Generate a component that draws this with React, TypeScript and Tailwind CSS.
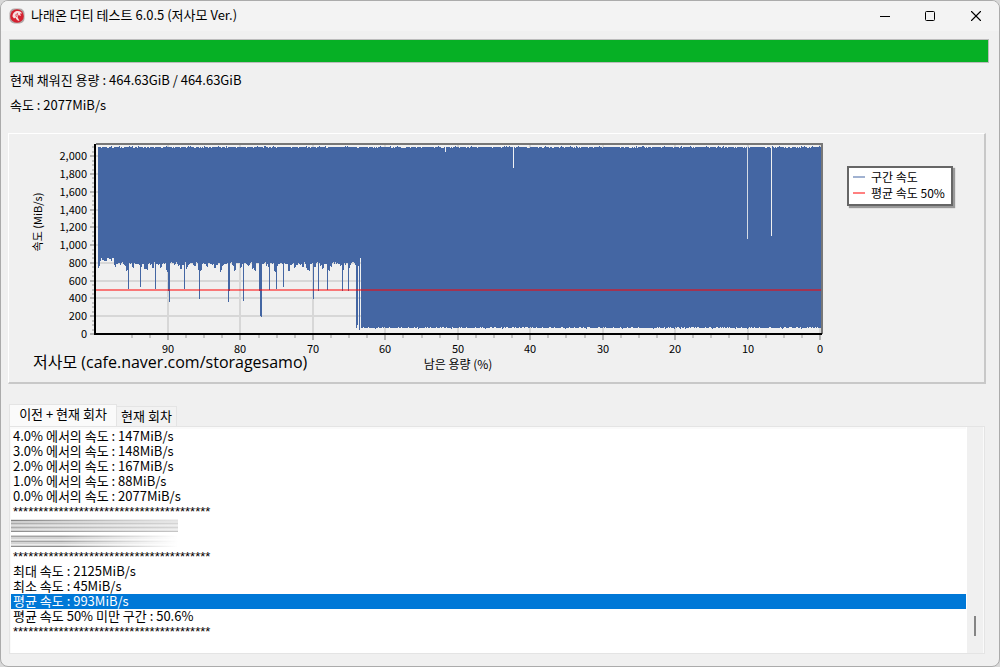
import React, { useState } from 'react';
import { X } from 'lucide-react';

const CHART_W = 820;
const CHART_H = 248;
const PLOT_LEFT = 86;
const PLOT_RIGHT = 811;
const PLOT_TOP = 11;
const BASE_Y = 200;

const yOf = (v: number) => Math.round(BASE_Y - v * 0.0889);
const xOf = (percent: number) => Math.round(PLOT_RIGHT - 1 - percent * 7.245);

const yTicks = [0, 200, 400, 600, 800, 1000, 1200, 1400, 1600, 1800, 2000];
const xTicks = [90, 80, 70, 60, 50, 40, 30, 20, 10, 0];

// column -> bottom of the drop
const drops: Record<number, number> = {
  118: 155, 130: 153, 145: 155, 158: 157, 159: 168, 174: 155, 189: 165,
  218: 168, 219: 157, 233: 167, 249: 157, 250: 182, 251: 183, 259: 156,
  266: 155, 273: 153, 303: 165, 308: 157, 317: 156, 332: 157, 338: 157,
  346: 194, 347: 191, 348: 132, 349: 196, 350: 124,
};

const dips = [0, 1, 0, 2, 7, 1, 0, 5, 1, 0, 1, 3, 0, 6, 7, 0, 1, 4, 0, 0, 2, 5, 1, 0, 8, 3, 0];

const noise = (x: number) => {
  const n = Math.sin(x * 12.9898) * 43758.5453;
  return n - Math.floor(n);
};

const buildBand = () => {
  let d = '';
  for (let x = 88; x < PLOT_RIGHT; x++) {
    const r = noise(x);
    const top = 12 + (r > 0.93 ? 0 : r > 0.25 ? 1 : 2);
    let bottom = 194 - (noise(x + 900) > 0.72 ? 1 : 0) + (noise(x + 500) > 0.97 ? 1 : 0);
    if (x <= 350) {
      const wave = dips[Math.floor(x / 2) % dips.length];
      bottom = drops[x] ?? 128 + wave + Math.floor(noise(x + 40) * 3);
      if (!drops[x] && x > 89 && x < 104) bottom = 124 + Math.floor(r * 4);
    }
    d += `M${x} ${top}h1V${bottom}h-1z`;
  }
  return d;
};

const band = buildBand();

const logLines = [
  '4.0% 에서의 속도 : 147MiB/s',
  '3.0% 에서의 속도 : 148MiB/s',
  '2.0% 에서의 속도 : 167MiB/s',
  '1.0% 에서의 속도 : 88MiB/s',
  '0.0% 에서의 속도 : 2077MiB/s',
  '*',
  '',
  '',
  '*',
  '최대 속도 : 2125MiB/s',
  '최소 속도 : 45MiB/s',
  '평균 속도 : 993MiB/s',
  '평균 속도 50% 미만 구간 : 50.6%',
  '*',
];

function AppIcon() {
  return (
    <svg className="h-4 w-4 shrink-0" viewBox="0 0 16 16">
      <rect x="0.5" y="0.5" width="15" height="15" rx="5" fill="#b0a6a6" />
      <circle cx="8" cy="8" r="6.8" fill="#d5202f" />
      <path d="M3.500 8.500C3.500 5 6 3 9 3c2 0 3.500 1 4 2.500l-2 0 1 2.500-2.500-1L8.500 9l2 4C8 12.500 7 11 6.500 9.500L5 10.500z" fill="#f7dfe0" />
      <path d="M6 7.500L9 5M7 9l2-3" stroke="#d5202f" strokeWidth="0.7" />
    </svg>
  );
}

function SpeedChart() {
  const minorY = Array.from({ length: 43 }, (_, i) => i * 50);
  const minorX = Array.from({ length: 39 }, (_, i) => i * 2.5);

  return (
    <svg viewBox={`0 0 ${CHART_W} ${CHART_H}`} className="block min-w-0 flex-1" role="img" aria-label="속도 그래프">
      <g shapeRendering="crispEdges">
        {yTicks.map((v) => (
          <rect key={v} x={PLOT_LEFT} y={yOf(v) - 1} width={PLOT_RIGHT - PLOT_LEFT} height="2" fill="#d7d7d7" />
        ))}
        {xTicks.map((p) => (
          <rect key={p} x={xOf(p) - 1} y={PLOT_TOP} width="2" height={BASE_Y - PLOT_TOP} fill="#d7d7d7" />
        ))}
        {minorY.map((v) => (
          <rect key={v} x="82" y={yOf(v) - 1} width="3" height="2" fill="#c4c4c4" />
        ))}
        {minorX.map((p) => (
          <rect key={p} x={xOf(p) - 1} y="201" width="2" height="3" fill="#c4c4c4" />
        ))}
        {yTicks.map((v) => (
          <rect key={v} x="80" y={yOf(v) - 1} width="5" height="2" fill="#b4b4b4" />
        ))}
        {xTicks.map((p) => (
          <rect key={p} x={xOf(p) - 1} y="201" width="2" height="5" fill="#b4b4b4" />
        ))}
        <path d={band} fill="#4466a3" />
        <rect x="503" y="12" width="1" height="22" fill="#eff1f4" />
        <rect x="435" y="12" width="1" height="6" fill="#eff1f4" />
        <rect x="737" y="12" width="1" height="93" fill="#d5dbe5" />
        <rect x="761" y="12" width="1" height="90" fill="#f0f0f0" />
        <rect x={PLOT_LEFT} y="155" width={PLOT_RIGHT - PLOT_LEFT} height="2" fill="#ff0000" fillOpacity="0.5" />
        <rect x={PLOT_LEFT} y="9" width="727" height="2" fill="#777777" />
        <rect x="811" y="9" width="2" height="191" fill="#777777" />
        <rect x="84" y="10" width="2" height="191" fill="#000000" />
        <rect x="84" y="199" width="728" height="2" fill="#000000" />
      </g>
      <g fill="#000000" fontSize="11">
        {yTicks.map((v) => (
          <text key={v} x="77" y={yOf(v) + 4} textAnchor="end">{v.toLocaleString('en-US')}</text>
        ))}
        {xTicks.map((p) => (
          <text key={p} x={xOf(p)} y="219" textAnchor="middle">{p}</text>
        ))}
        <text x="448" y="235" fontSize="12" textAnchor="middle">남은 용량 (%)</text>
        <text transform="translate(32 88) rotate(-90)" fontSize="11" textAnchor="middle">속도 (MiB/s)</text>
        <text x="23" y="234" fontSize="16" className="font-['Open_Sans','Noto_Sans_CJK_KR',sans-serif]">
          저사모 (cafe.naver.com/storagesamo)
        </text>
      </g>
    </svg>
  );
}

function Legend() {
  return (
    <ul className="mt-8 mr-[31px] ml-[17px] w-[106px] shrink-0 border-2 border-[#666666] bg-white px-1 pt-px pb-[3px] text-xs leading-4 shadow-[2px_2px_1px_#999999]">
      <li className="flex items-center gap-1.5 whitespace-nowrap">
        <span className="h-0.5 w-3 shrink-0 bg-[#a1b2d1]" />
        구간 속도
      </li>
      <li className="flex items-center gap-1.5 whitespace-nowrap">
        <span className="h-0.5 w-3 shrink-0 bg-[#ff8080]" />
        평균 속도 50%
      </li>
    </ul>
  );
}

// 가려진 모델명 / 시리얼
function HiddenLines() {
  return (
    <svg className="block h-[30px] w-[167px]" viewBox="0 0 167 30" preserveAspectRatio="none">
      <defs>
        <linearGradient id="fadeTop">
          <stop offset="0" stopColor="#fff" stopOpacity="0" />
          <stop offset="1" stopColor="#fff" stopOpacity="0.5" />
        </linearGradient>
        <linearGradient id="fadeBottom">
          <stop offset="0.3" stopColor="#fff" stopOpacity="0" />
          <stop offset="1" stopColor="#fff" stopOpacity="1" />
        </linearGradient>
        <linearGradient id="fadeDark">
          <stop offset="0" stopColor="#808080" />
          <stop offset="1" stopColor="#808080" stopOpacity="0.1" />
        </linearGradient>
      </defs>
      <rect y="1" width="167" height="12" fill="#cecece" />
      <rect y="0" width="167" height="1" fill="#e4e4e4" />
      <rect y="1" width="167" height="1" fill="url(#fadeDark)" />
      <path d="M0 4.500h167M0 8.500h167" stroke="#ababab" />
      <path d="M0 6.500h167M0 10.500h167" stroke="#e0e0e0" />
      <path d="M0 12.500h167" stroke="#8e8e8e" />
      <rect width="167" height="13" fill="url(#fadeTop)" />
      <rect y="16" width="167" height="12" fill="#d4d4d4" />
      <path d="M0 17.500h167M0 22.500h167" stroke="#a4a4a4" />
      <path d="M0 20.500h167M0 25.500h167" stroke="#ececec" />
      <path d="M0 27.500h167" stroke="#8e8e8e" />
      <rect y="13" width="167" height="17" fill="url(#fadeBottom)" />
    </svg>
  );
}

export default function App() {
  const [tab, setTab] = useState(0);
  const [selected, setSelected] = useState(11);

  return (
    <div className="min-h-screen bg-[#d8d8d8]">
      <div
        className="flex min-h-screen flex-col overflow-hidden rounded-lg border border-[#ababab] bg-[#f0f0f0] text-[13px] text-black"
        style={{ fontFamily: '"Noto Sans CJK KR", sans-serif' }}
      >
        <header className="flex h-[30px] items-center bg-[#f3f3f3] pl-2">
          <AppIcon />
          <h1 className="ml-1.5 flex-1 pb-0.5 leading-5">나래온 더티 테스트 6.0.5 (저사모 Ver.)</h1>
          <button aria-label="최소화" className="flex h-full w-[45px] items-center justify-center">
            <svg width="10" height="10" viewBox="0 0 10 10">
              <path d="M0 5.500h10" stroke="#000" />
            </svg>
          </button>
          <button aria-label="최대화" className="flex h-full w-[45px] items-center justify-center">
            <svg width="10" height="10" viewBox="0 0 10 10">
              <rect x="0.5" y="0.5" width="9" height="9" rx="1" fill="none" stroke="#000" />
            </svg>
          </button>
          <button aria-label="닫기" className="flex h-full w-[47px] items-center justify-center">
            <X size={18} strokeWidth={1.5} />
          </button>
        </header>

        <main className="flex flex-1 flex-col pr-[14px] pb-3 pl-2">
          <div
            role="progressbar"
            aria-valuenow={100}
            aria-label="진행률"
            className="mt-2 -mr-1 h-6 border border-[#bcbcbc] bg-[#06b025]"
          />
          <p className="mt-[7px] ml-px leading-5">현재 채워진 용량 : 464.63GiB / 464.63GiB</p>
          <p className="mt-[5px] ml-px leading-5">속도 : 2077MiB/s</p>

          <section className="mt-[18px] -mr-px -ml-px flex items-start border-t border-r-2 border-b-2 border-l border-t-white border-r-[#c8c8c8] border-b-[#c8c8c8] border-l-white pl-px">
            <SpeedChart />
            <Legend />
          </section>

          <div role="tablist" className="mt-5 flex items-end">
            <button
              role="tab"
              aria-selected={tab === 0}
              onClick={() => setTab(0)}
              className="h-[22px] w-[108px] border border-b-0 border-[#e4e4e4] bg-[#fafafa] pb-1 leading-4 whitespace-nowrap"
            >
              이전 + 현재 회차
            </button>
            <button
              role="tab"
              aria-selected={tab === 1}
              onClick={() => setTab(1)}
              className="h-5 w-[60px] border border-b-0 border-l-0 border-[#e4e4e4] bg-[#f2f2f2] pb-0.5 leading-4 whitespace-nowrap"
            >
              현재 회차
            </button>
          </div>

          <div className="flex flex-1 border border-[#e4e4e4] bg-white">
            <ul role="listbox" aria-label="결과" className="mr-px flex-1 border-t-2 border-l border-[#fafafa]">
              {logLines.map((line, i) => {
                if (i === 6) return <li key={i}><HiddenLines /></li>;
                if (i === 7) return null;
                return (
                  <li
                    key={i}
                    role="option"
                    aria-selected={i === selected}
                    onClick={() => setSelected(i)}
                    className={`h-[15px] pl-0.5 leading-[13px] whitespace-nowrap ${i === selected ? 'bg-[#0078d7] text-white' : ''}`}
                  >
                    {line === '*' ? (
                      <span className="block font-['Liberation_Sans'] leading-4">{'*'.repeat(39)}</span>
                    ) : (
                      line
                    )}
                  </li>
                );
              })}
            </ul>
            <div className="flex w-[17px] flex-col items-center justify-end border-r border-[#fafafa] bg-[#f0f0f0] pb-[17px]">
              <div className="h-5 w-0.5 bg-[#858585]" />
            </div>
          </div>
        </main>
      </div>
    </div>
  );
}
